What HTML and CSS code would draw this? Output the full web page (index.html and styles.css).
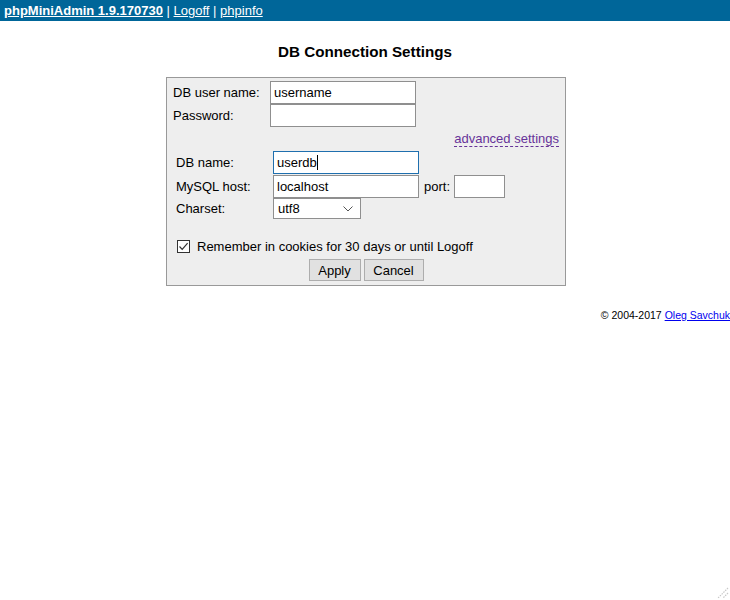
FILE: index.html
```html
<!DOCTYPE html>
<html>
<head>
<meta charset="utf-8">
<title>phpMiniAdmin</title>
<link rel="stylesheet" href="styles.css">
</head>
<body>
<div class="topbar">
  <a class="brand" href="#">phpMiniAdmin 1.9.170730</a> | <a href="#">Logoff</a> | <a href="#">phpinfo</a>
</div>
<h3 class="title">DB Connection Settings</h3>
<form class="frm">
  <div class="row"><label class="l">DB user name:</label><input class="txt" type="text" value="username"></div>
  <div class="row"><label class="l">Password:</label><input class="txt" type="password" value=""></div>
  <div class="adv-link"><a href="#">advanced settings</a></div>
  <div class="adv">
    <div class="row row-db"><label class="l">DB name:</label><span class="focus-wrap"><input class="txt focused" type="text" value="userdb"><span class="caret"></span></span></div>
    <div class="row"><label class="l">MySQL host:</label><input class="txt" type="text" value="localhost"><span class="port-label">port:</span><input class="txt port" type="text" value=""></div>
    <div class="row row-cs"><label class="l">Charset:</label><span class="sel-wrap"><select class="sel"><option>utf8</option></select><svg class="chev" width="10" height="6" viewBox="0 0 10 6"><path d="M0.5 0.5 L5 5 L9.5 0.5" fill="none" stroke="#555" stroke-width="1"/></svg></span></div>
    <div class="remember"><span class="cb"><svg width="11" height="11" viewBox="0 0 11 11"><path d="M1.5 5.5 L4.2 8.3 L9.6 2.2" fill="none" stroke="#333" stroke-width="1.2"/></svg></span><span>Remember in cookies for 30 days or until Logoff</span></div>
  </div>
  <div class="buttons"><button type="button" class="btn btn-apply">Apply</button><button type="button" class="btn btn-cancel">Cancel</button></div>
</form>
<div class="footer">© 2004-2017 <a href="#">Oleg Savchuk</a></div>
<svg class="grip" width="16" height="16" viewBox="0 0 16 16">
  <g stroke="#c8c8c8" stroke-width="1.2" stroke-dasharray="1.5 1">
    <line x1="15" y1="5" x2="5" y2="15"/>
    <line x1="15" y1="10" x2="10" y2="15"/>
  </g>
</svg>
</body>
</html>
```
FILE: styles.css
```css
html, body {
  margin: 0;
  padding: 0;
  background: #fff;
}
body {
  font-family: "Liberation Sans", Arial, sans-serif;
  font-size: 13px;
  color: #000;
}
.topbar {
  background: #006699;
  color: #fff;
  height: 21px;
  line-height: 21px;
  padding-left: 4px;
  white-space: nowrap;
}
.topbar a {
  color: #fff;
  text-decoration: underline;
}
.topbar a.brand {
  font-weight: bold;
}
.title {
  margin: 22px 0 16px 0;
  text-align: center;
  font-size: 15.2px;
  line-height: 18px;
  font-weight: bold;
}
.frm {
  display: block;
  box-sizing: border-box;
  width: 400px;
  margin: 0 auto;
  position: relative;
  left: 1px;
  border: 1px solid #999;
  background: #eee;
  padding: 3px 6px 4px 6px;
}
.row {
  display: flex;
  align-items: center;
  height: 23px;
}
.l {
  width: 97px;
  flex: none;
}
.txt {
  box-sizing: border-box;
  width: 146px;
  height: 23px;
  border: 1px solid #8f8f8f;
  border-radius: 0;
  background: #fff;
  padding: 0 3px;
  margin: 0;
  font-family: "Liberation Sans", Arial, sans-serif;
  font-size: 13px;
  color: #000;
  outline: none;
}
.adv-link {
  text-align: right;
  margin: 4px 0 4px 0;
  line-height: 15px;
  height: 16px;
}
.adv-link a {
  color: #663399;
  text-decoration: none;
  border-bottom: 1px dashed #663399;
}
.adv {
  padding-left: 3px;
}
.row-db {
  margin-bottom: 1px;
}
.focus-wrap {
  position: relative;
  display: inline-block;
  height: 23px;
}
.txt.focused {
  border-color: #1f6fae;
}
.caret {
  position: absolute;
  left: 44px;
  top: 4px;
  width: 1px;
  height: 15px;
  background: #000;
}
.port-label {
  margin: 0 4px 0 5px;
}
.txt.port {
  width: 51px;
}
.row-cs {
  height: 21px;
}
.sel-wrap {
  position: relative;
  display: inline-block;
  height: 21px;
}
.sel {
  -webkit-appearance: none;
  appearance: none;
  box-sizing: border-box;
  width: 88px;
  height: 21px;
  border: 1px solid #8f8f8f;
  border-radius: 0;
  background: #fff;
  padding: 0 4px;
  margin: 0;
  font-family: "Liberation Sans", Arial, sans-serif;
  font-size: 13px;
  color: #000;
}
.chev {
  position: absolute;
  right: 8px;
  top: 8px;
  pointer-events: none;
}
.remember {
  display: flex;
  align-items: center;
  margin-top: 19px;
  height: 16px;
}
.cb {
  box-sizing: border-box;
  width: 13px;
  height: 13px;
  border: 1px solid #333;
  background: #fff;
  margin: 0 7px 0 1px;
  display: flex;
  align-items: center;
  justify-content: center;
}
.cb svg {
  display: block;
}
.buttons {
  display: flex;
  justify-content: center;
  gap: 3px;
  margin-top: 5px;
}
.btn {
  box-sizing: border-box;
  height: 22px;
  border: 1px solid #adadad;
  background: #e1e1e1;
  border-radius: 0;
  padding: 0;
  margin: 0;
  font-family: "Liberation Sans", Arial, sans-serif;
  font-size: 13px;
  color: #000;
}
.btn-apply {
  width: 52px;
}
.btn-cancel {
  width: 60px;
}
.footer {
  text-align: right;
  font-size: 10.5px;
  margin-top: 23px;
  line-height: 13px;
  white-space: nowrap;
}
.footer a {
  color: #0000ee;
  text-decoration: underline;
}
.grip {
  position: fixed;
  right: 1px;
  bottom: 1px;
}
```
